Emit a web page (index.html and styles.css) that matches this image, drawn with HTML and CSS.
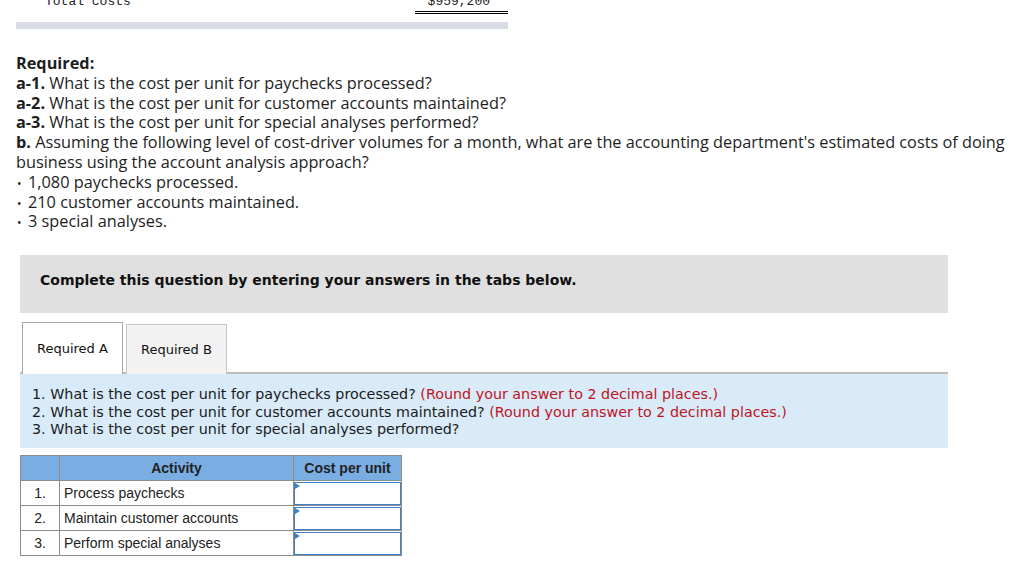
FILE: index.html
```html
<!DOCTYPE html>
<html lang="en">
<head>
<meta charset="utf-8">
<title>Required</title>
<link rel="stylesheet" href="styles.css">
</head>
<body>
<div class="page">
  <div class="totals">
    <span class="totals-label">Total costs</span>
    <span class="totals-amount">$959,200</span>
  </div>
  <div class="divider"></div>

  <div class="question">
    <div class="q-title">Required:</div>
    <div><b>a-1.</b> What is the cost per unit for paychecks processed?</div>
    <div><b>a-2.</b> What is the cost per unit for customer accounts maintained?</div>
    <div><b>a-3.</b> What is the cost per unit for special analyses performed?</div>
    <div><b>b.</b> Assuming the following level of cost-driver volumes for a month, what are the accounting department's estimated costs of doing business using the account analysis approach?</div>
    <ul class="bullets">
      <li>1,080 paychecks processed.</li>
      <li>210 customer accounts maintained.</li>
      <li>3 special analyses.</li>
    </ul>
  </div>

  <div class="instruct">Complete this question by entering your answers in the tabs below.</div>

  <div class="tabs">
    <div class="tab active">Required A</div>
    <div class="tab">Required B</div>
  </div>
  <div class="panel">
    <div>1. What is the cost per unit for paychecks processed? <span class="hint">(Round your answer to 2 decimal places.)</span></div>
    <div>2. What is the cost per unit for customer accounts maintained? <span class="hint">(Round your answer to 2 decimal places.)</span></div>
    <div>3. What is the cost per unit for special analyses performed?</div>
  </div>

  <table class="grid">
    <thead>
      <tr><th class="c-num"></th><th class="c-act">Activity</th><th class="c-cost">Cost per unit</th></tr>
    </thead>
    <tbody>
      <tr><td class="c-num">1.</td><td class="c-act">Process paychecks</td><td class="c-cost"><div class="input"></div></td></tr>
      <tr><td class="c-num">2.</td><td class="c-act">Maintain customer accounts</td><td class="c-cost"><div class="input"></div></td></tr>
      <tr><td class="c-num">3.</td><td class="c-act">Perform special analyses</td><td class="c-cost"><div class="input"></div></td></tr>
    </tbody>
  </table>
</div>
</body>
</html>
```

FILE: styles.css
```css
* { box-sizing: border-box; }
html, body { margin: 0; padding: 0; background: #fff; }
body { overflow: hidden; }
.page { width: 1024px; height: 564px; overflow: hidden; }

.totals {
  width: 492px;
  margin: -6px 0 0 16px;
  display: flex;
  justify-content: space-between;
  font-family: "Liberation Mono", monospace;
  font-size: 13px;
  line-height: 15px;
  color: #222;
}
.totals-label { padding-left: 29px; }
.totals-amount {
  width: 93px;
  text-align: right;
  padding-right: 18px;
  border-bottom: 3px double #000;
  height: 20px;
}
.divider {
  width: 492px;
  height: 7px;
  margin: 8px 0 0 16px;
  background: #d9dce5;
}

.question {
  margin: 25px 0 0 16px;
  font-family: "Open Sans", Lato, sans-serif;
  font-size: 16.3px;
  line-height: 19.8px;
  color: #1e1e1e;
}
.question b, .q-title { font-weight: 700; }
.bullets { list-style: none; margin: 0; padding: 0; }
.bullets li::before {
  content: "\2022";
  display: inline-block;
  width: 11px;
  padding-left: 1px;
  font-size: 12px;
  line-height: 1;
}

.instruct {
  width: 928px;
  margin: 23px 0 0 20px;
  height: 58px;
  padding: 15px 20px 0 20px;
  background: #e0e0e0;
  font-family: "DejaVu Sans", Verdana, sans-serif;
  font-weight: 700;
  font-size: 14px;
  line-height: 20px;
  color: #111;
}

.tabs {
  display: flex;
  align-items: flex-end;
  gap: 3px;
  margin: 9px 0 0 22px;
  position: relative;
  z-index: 1;
  margin-bottom: -2px;
}
.tab {
  width: 101px;
  height: 50px;
  padding-left: 14px;
  display: flex;
  align-items: center;
  font-family: "DejaVu Sans", Verdana, sans-serif;
  font-size: 13px;
  color: #111;
  background: #f2f2f2;
  border: 1px solid #c8c8c8;
  border-bottom: none;
}
.tab.active {
  height: 52px;
  background: #fff;
  border-color: #a8a8a8;
}

.panel {
  width: 928px;
  margin-left: 20px;
  height: 76px;
  padding: 12px 12px 0 12px;
  border-top: 2px solid #bcbcbc;
  background: #d9ebf9;
  font-family: "DejaVu Sans", Verdana, sans-serif;
  font-size: 14.3px;
  line-height: 17.5px;
  color: #1a1a1a;
}
.hint { color: #c0141c; }

.grid {
  margin: 7px 0 0 20px;
  border-collapse: collapse;
  font-family: "Liberation Sans", Arial, sans-serif;
  font-size: 14px;
  color: #222;
}
.grid th, .grid td {
  border: 1px solid #8c8c8c;
  height: 25px;
  padding: 0;
}
.grid th {
  background: #7aaee3;
  font-weight: 700;
  font-size: 14px;
  text-align: center;
}
.c-num { width: 39px; text-align: center; }
.c-act { width: 234px; text-align: left; }
td.c-act { padding-left: 4px !important; }
.c-cost { width: 108px; }
td.c-cost { padding: 0 !important; }
.input {
  height: 23px;
  border: 1.5px solid #3f7fc4;
  background: #fff;
  position: relative;
}
.input::before {
  content: "";
  position: absolute;
  left: 0;
  top: 0;
  border-left: 5px solid #3f7fc4;
  border-top: 3px solid transparent;
  border-bottom: 3px solid transparent;
}
```
